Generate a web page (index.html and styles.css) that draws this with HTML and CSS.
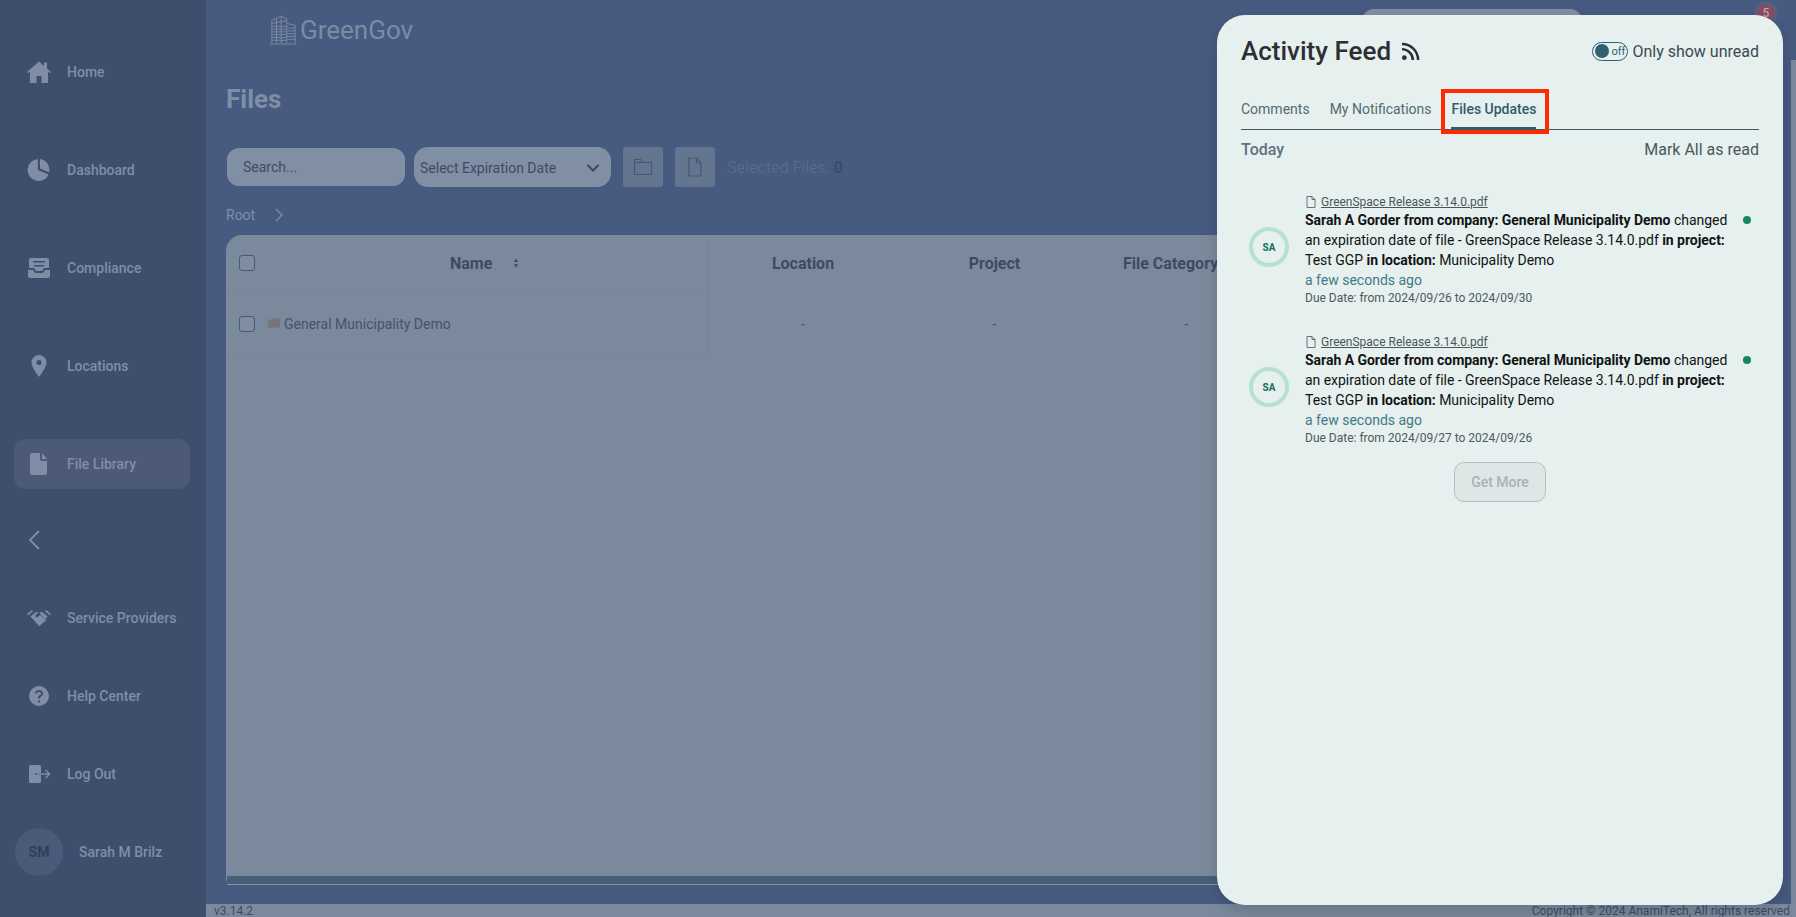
FILE: index.html
```html
<!DOCTYPE html>
<html>
	<head>
		<meta charset="utf-8">
		<title>Files - GreenGov</title>
		<link rel="stylesheet" href="styles.css">
	</head>
	<body>
		<!-- 左侧导航 -->
		<aside class="sidebar">
			<a class="nav-item">
				<svg class="nav-icon" viewBox="0 0 24 24"><path d="M12 1.500 0 12l1 1.200L3 11.600V23h6.500v-7h5v7H21V11.600l2 1.600 1-1.200-4-3.500V2.500h-3v3.400z"/></svg>
				<span>Home</span>
			</a>
			<a class="nav-item">
				<svg class="nav-icon" viewBox="0 0 24 24"><path d="M10.800 1A11 11 0 1 0 21.600 16.600L10.800 12zM13 1v9.600l9.200 3.600A11 11 0 0 0 13 1z"/></svg>
				<span>Dashboard</span>
			</a>
			<a class="nav-item">
				<svg class="nav-icon" viewBox="0 0 24 24"><path d="M4 2h16a2 2 0 0 1 2 2v8h-5l-2 3H9l-2-3H2V4a2 2 0 0 1 2-2zm2 3v1.500h12V5zm1 4v1.500h10V9zM1 14h5l2 3h8l2-3h5v6a2 2 0 0 1-2 2H3a2 2 0 0 1-2-2z" fill-rule="evenodd"/></svg>
				<span>Compliance</span>
			</a>
			<a class="nav-item">
				<svg class="nav-icon" viewBox="0 0 24 24"><path d="M12 1a7.500 7.500 0 0 0-7.500 7.500C4.500 13.500 12 23 12 23s7.500-9.500 7.500-14.500A7.500 7.500 0 0 0 12 1zm0 5a2.500 2.500 0 1 1 0 5 2.500 2.500 0 0 1 0-5z" fill-rule="evenodd"/></svg>
				<span>Locations</span>
			</a>
			<a class="nav-item active">
				<svg class="nav-icon" viewBox="0 0 24 24"><path d="M5 1h8v6a2 2 0 0 0 2 2h5v12a2 2 0 0 1-2 2H5a2 2 0 0 1-2-2V3a2 2 0 0 1 2-2zm10 0 5 6h-5z"/></svg>
				<span>File Library</span>
			</a>
			<div class="collapse">
				<svg viewBox="0 0 12 20"><path d="M11 1 2 10l9 9" fill="none" stroke="currentColor" stroke-width="1.800"/></svg>
			</div>
			<a class="nav-item low">
				<svg class="nav-icon" viewBox="0 0 24 24"><path d="M0 8 5 4l1 1.300-4.800 3.900zM24 8l-5-4-1 1.300 4.800 3.900zM3.500 10.500 9 6h2.500L8 10l2 1.500 3-2.500 6.500 5L13 19.500l-1 .5zM13.500 6H15l5.500 4.500-1.800 2.500-5.700-5z"/></svg>
				<span>Service Providers</span>
			</a>
			<a class="nav-item low">
				<svg class="nav-icon" viewBox="0 0 24 24"><path d="M12 2a10 10 0 1 0 0 20 10 10 0 0 0 0-20zm-1 14.500h2v2h-2zm1-10.500c2.300 0 4 1.400 4 3.400 0 1.500-.8 2.300-1.900 3-.9.600-1.100.9-1.100 2.100h-2c0-1.900.5-2.700 1.900-3.600.8-.5 1.100-.9 1.100-1.500 0-.8-.8-1.400-2-1.400-1.100 0-1.900.6-2.100 1.700l-2-.4C8.400 7.200 10 6 12 6z" fill-rule="evenodd"/></svg>
				<span>Help Center</span>
			</a>
			<a class="nav-item low">
				<svg class="nav-icon" viewBox="0 0 24 24"><path d="M3.500 3h9A1.500 1.500 0 0 1 14 4.500V11H8v2h6v6.500a1.500 1.500 0 0 1-1.500 1.500h-9A1.500 1.500 0 0 1 2 19.500v-15A1.500 1.500 0 0 1 3.500 3z"/><path class="out-arrow" d="M9 12h13.500M18.500 8l4 4-4 4"/></svg>
				<span>Log Out</span>
			</a>
			<div class="user">
				<div class="user-avatar">SM</div>
				<span>Sarah M Brilz</span>
			</div>
		</aside>

		<div class="main">
			<header class="topbar">
				<div class="logo">
					<svg class="logo-mark" viewBox="0 0 30 32" fill="none" stroke="currentColor" stroke-width="1">
						<path d="M3 30V6L13 1l6 3v26M19 9l9 2v19M1 31h28"/>
						<path d="M3 9l16-3M3 12h16M3 15h16M3 18h16M3 21h16M3 24h16M3 27h16M19 14h9M19 17h9M19 20h9M19 23h9M19 26h9M8 3v27M13 1v29"/>
					</svg>
					<span>GreenGov</span>
				</div>
				<div class="top-search"></div>
				<div class="top-badge"><span>5</span></div>
			</header>

			<section class="content">
				<h1>Files</h1>
				<div class="toolbar">
					<div class="search">Search...</div>
					<div class="select">
						<span>Select Expiration Date</span>
						<svg viewBox="0 0 14 10"><path d="M1.500 2 7 7.500 12.500 2" fill="none" stroke="currentColor" stroke-width="2.200"/></svg>
					</div>
					<div class="tool-btn">
						<svg viewBox="0 0 20 18" fill="none" stroke="currentColor" stroke-width="1.200"><path d="M1.500 16.500V1.500h6l2 3h9v12zM1.500 4.500h8"/></svg>
					</div>
					<div class="tool-btn">
						<svg viewBox="0 0 14 20" fill="none" stroke="currentColor" stroke-width="1.200"><path d="M1 1h7.500L13 6v13H1zM8.500 1v5H13"/></svg>
					</div>
					<div class="selected">Selected Files: <b>0</b></div>
				</div>
				<div class="crumbs">
					<span>Root</span>
					<svg viewBox="0 0 8 14"><path d="M1 1l6 6-6 6" fill="none" stroke="currentColor" stroke-width="1.200"/></svg>
				</div>

				<div class="table">
					<div class="t-row t-head">
						<div class="t-name">
							<i class="check"></i>
							<span class="t-title">Name</span>
							<svg class="sort" viewBox="0 0 8 12"><path d="M4 0l3 4.500H1zM4 12 1 7.500h6z"/></svg>
						</div>
						<div class="t-cell">Location</div>
						<div class="t-cell">Project</div>
						<div class="t-cell shifted">File Category</div>
					</div>
					<div class="t-row t-body">
						<div class="t-name">
							<i class="check"></i>
							<svg class="folder" viewBox="0 0 12 10"><path d="M0 1.500h5V.500h7V9.500H0z"/></svg>
							<span>General Municipality Demo</span>
						</div>
						<div class="t-cell">-</div>
						<div class="t-cell">-</div>
						<div class="t-cell">-</div>
					</div>
					<div class="t-scroll"></div>
				</div>
			</section>

			<footer class="footer">
				<span>v3.14.2</span>
				<span>Copyright © 2024 AnamiTech, All rights reserved</span>
			</footer>
		</div>

		<!-- 右侧活动面板 盖在页面上面 -->
		<aside class="feed">
			<div class="feed-top">
				<h2>Activity Feed</h2>
				<svg class="rss" viewBox="0 0 20 20"><circle cx="3.500" cy="16.500" r="2.500"/><path d="M1 7.500a11.500 11.500 0 0 1 11.500 11.500M1 2a17 17 0 0 1 17 17" fill="none" stroke="currentColor" stroke-width="2.600"/></svg>
				<div class="toggle"><i></i><span>off</span></div>
				<span class="toggle-label">Only show unread</span>
			</div>

			<nav class="tabs">
				<a>Comments</a>
				<a>My Notifications</a>
				<a class="current">Files Updates</a>
				<div class="tab-mark"></div>
			</nav>

			<div class="day">
				<b>Today</b>
				<span>Mark All as read</span>
			</div>

			<article class="note">
				<div class="note-avatar">SA</div>
				<div class="note-text">
					<a class="note-file">
						<svg viewBox="0 0 10 12" fill="none" stroke="currentColor" stroke-width=".8"><path d="M1 .5h5L9 3.500V11.500H1zM6 .5v3h3"/></svg>
						<u>GreenSpace Release 3.14.0.pdf</u>
					</a>
					<p><b>Sarah A Gorder from company: General Municipality Demo</b> changed an expiration date of file - GreenSpace Release 3.14.0.pdf <b>in project:</b> Test GGP <b>in location:</b> Municipality Demo</p>
					<div class="note-time">a few seconds ago</div>
					<div class="note-due">Due Date: from 2024/09/26 to 2024/09/30</div>
				</div>
				<i class="dot"></i>
			</article>

			<article class="note">
				<div class="note-avatar">SA</div>
				<div class="note-text">
					<a class="note-file">
						<svg viewBox="0 0 10 12" fill="none" stroke="currentColor" stroke-width=".8"><path d="M1 .5h5L9 3.500V11.500H1zM6 .5v3h3"/></svg>
						<u>GreenSpace Release 3.14.0.pdf</u>
					</a>
					<p><b>Sarah A Gorder from company: General Municipality Demo</b> changed an expiration date of file - GreenSpace Release 3.14.0.pdf <b>in project:</b> Test GGP <b>in location:</b> Municipality Demo</p>
					<div class="note-time">a few seconds ago</div>
					<div class="note-due">Due Date: from 2024/09/27 to 2024/09/26</div>
				</div>
				<i class="dot"></i>
			</article>

			<div class="more-wrap"><button class="more">Get More</button></div>

			<!-- 红框 标出当前tab -->
			<div class="marker"></div>
		</aside>
	</body>
</html>
```

FILE: styles.css
```css
*{
	box-sizing: border-box;
}
html,body{
	height: 100%;
}
body{
	display: flex;
	height: 917px;
	margin: 0;
	overflow: hidden;
	background-color: #475a80;
	font-family: Roboto, "Liberation Sans", sans-serif;
}

/* 左侧导航 */
.sidebar{
	display: flex;
	flex-direction: column;
	flex: none;
	width: 206px;
	padding: 47px 16px 0 14px;
	background-color: #3e4e6d;
	color: #7f8ea6;
}
.nav-item{
	display: flex;
	align-items: center;
	height: 50px;
	margin-bottom: 48px;
	padding-left: 13px;
	border-radius: 12px;
	font-size: 14px;
	font-weight: 500;
}
.nav-item.low{
	margin-bottom: 28px;
}
.nav-item.active{
	margin-bottom: 41px;
	background-color: #4c5a78;
}
.nav-icon{
	flex: none;
	width: 24px;
	height: 24px;
	margin-right: 16px;
	fill: currentColor;
}
.out-arrow{
	fill: none;
	stroke: currentColor;
	stroke-width: 1.400;
}
.collapse{
	height: 24px;
	margin-bottom: 39px;
	padding-left: 14px;
}
.collapse svg{
	display: block;
	width: 12px;
	height: 20px;
}
.user{
	display: flex;
	align-items: center;
	margin-top: 1px;
	margin-left: 1px;
	font-size: 14px;
	font-weight: 500;
}
.user-avatar{
	display: flex;
	align-items: center;
	justify-content: center;
	width: 48px;
	height: 48px;
	margin-right: 16px;
	border-radius: 50%;
	background-color: #4a5a79;
	color: #323e58;
	font-weight: 700;
}

/* 主体 */
.main{
	display: flex;
	flex-direction: column;
	flex: 1;
	min-width: 0;
}
.topbar{
	position: relative;
	display: flex;
	align-items: center;
	flex: none;
	height: 60px;
	padding-left: 63px;
	border-bottom: 1px solid #445576;
}
.logo{
	display: flex;
	align-items: center;
	margin-top: 1px;
	color: #7c8ba4;
	font-size: 26px;
}
.logo-mark{
	width: 28px;
	height: 30px;
	margin-right: 3px;
}
.top-search{
	position: absolute;
	top: 9px;
	left: 1156px;
	width: 220px;
	height: 40px;
	border-radius: 12px;
	background-color: #818fa5;
}
.top-badge{
	position: absolute;
	top: 1px;
	right: 18px;
	width: 24px;
	height: 24px;
	padding: 3px;
	border-radius: 50%;
	background-color: #4c6582;
}
.top-badge span{
	display: block;
	width: 18px;
	height: 18px;
	border-radius: 50%;
	background-color: #8a4a62;
	color: #b9a5ae;
	font-size: 12px;
	font-weight: 500;
	line-height: 18px;
	text-align: center;
}

.content{
	display: flex;
	flex-direction: column;
	flex: 1;
	min-height: 0;
	padding: 0 40px 19px 20px;
	border-right: 5px solid #7a8a9c;
}
h1{
	height: 34px;
	margin: 23px 0 0;
	color: #7f8ea6;
	font-size: 26px;
	font-weight: 700;
	line-height: 32px;
}
.toolbar{
	display: flex;
	align-items: center;
	gap: 9px;
	height: 40px;
	margin-top: 30px;
	margin-left: 1px;
}
.search{
	width: 178px;
	height: 38px;
	padding-left: 16px;
	border-radius: 12px;
	background-color: #818fa5;
	color: #3e4a63;
	font-size: 14px;
	line-height: 38px;
}
.select{
	display: flex;
	align-items: center;
	justify-content: space-between;
	width: 197px;
	height: 40px;
	padding: 2px 11px 0 6px;
	border-radius: 14px;
	background-color: #818fa5;
	color: #3e4a63;
	font-size: 14px;
}
.select svg{
	width: 14px;
	height: 10px;
}
.tool-btn{
	display: flex;
	align-items: center;
	justify-content: center;
	width: 40px;
	height: 40px;
	margin-left: 3px;
	border-radius: 3px;
	background-color: #64758f;
	color: #47577a;
}
.tool-btn svg{
	width: 20px;
	height: 20px;
}
.selected{
	margin-left: 3px;
	color: #5a6985;
	font-size: 16px;
}
.selected b{
	color: #3e4a63;
}
.crumbs{
	display: flex;
	align-items: center;
	height: 20px;
	margin-top: 18px;
	color: #7f8ea6;
	font-size: 14px;
}
.crumbs svg{
	width: 8px;
	height: 14px;
	margin-left: 20px;
}

/* 表格 */
.table{
	position: relative;
	flex: 1;
	margin-top: 10px;
	padding-bottom: 8px;
	border-radius: 16px 16px 0 6px;
	background-color: #7a8a9c;
	color: #46526b;
	font-size: 14px;
}
.t-row{
	display: grid;
	grid-template-columns: 483px 191px 192px 192px;
	align-items: stretch;
}
.t-head{
	height: 57px;
	color: #3e4a63;
	font-size: 16px;
	font-weight: 700;
}
.t-body{
	height: 64px;
}
.t-name{
	position: relative;
	display: flex;
	align-items: center;
	padding-left: 13px;
	border-right: 1px solid #76869a;
	border-bottom: 1px solid #76869a;
}
.t-cell{
	display: flex;
	align-items: center;
	justify-content: center;
	padding-right: 3px;
}
.t-cell.shifted{
	justify-content: flex-start;
	padding-right: 0;
	padding-left: 31px;
	white-space: nowrap;
}
.check{
	flex: none;
	width: 16px;
	height: 16px;
	border: 1px solid #485a7c;
	border-radius: 3px;
	background-color: #7f8da3;
}
.t-body .check{
	margin-right: 13px;
}
.t-title{
	margin-left: 195px;
}
.sort{
	width: 6px;
	height: 10px;
	margin-left: 21px;
	fill: currentColor;
}
.folder{
	width: 12px;
	height: 10px;
	margin: -2px 4px 0 0;
	fill: #75757a;
}
.t-scroll{
	position: absolute;
	right: 0;
	bottom: 0;
	left: 1px;
	height: 9px;
	border-bottom: 1px solid #7f95a8;
	background-color: #466177;
}

.footer{
	display: flex;
	justify-content: space-between;
	flex: none;
	height: 13px;
	padding: 0 6px 0 8px;
	background-color: #7a8a9c;
	color: #3e4a63;
	font-size: 12px;
	line-height: 15px;
}

/* 活动面板 */
.feed{
	position: absolute;
	top: 15px;
	left: 1217px;
	width: 566px;
	height: 890px;
	padding: 18px 24px 0;
	border-radius: 28px;
	background-color: #e6f0ee;
	box-shadow: 0 6px 16px rgba(0,0,0,0.15);
}
.feed-top{
	display: flex;
	align-items: center;
	height: 36px;
}
h2{
	margin: 0;
	color: #2b2f33;
	font-size: 26px;
	font-weight: 500;
}
.rss{
	width: 19px;
	height: 19px;
	margin-top: 1px;
	margin-left: 10px;
	fill: #2b2f33;
	color: #2b2f33;
}
.toggle{
	display: flex;
	align-items: center;
	justify-content: space-between;
	width: 36px;
	height: 19px;
	margin-left: auto;
	padding: 0 2px;
	border: 1px solid #2f6170;
	border-radius: 10px;
	color: #2f6170;
	font-size: 11px;
}
.toggle i{
	width: 14px;
	height: 14px;
	border-radius: 50%;
	background-color: #2f6170;
}
.toggle-label{
	margin-left: 4px;
	color: #3b4a4e;
	font-size: 16px;
}
.tabs{
	position: relative;
	display: flex;
	height: 31px;
	margin-top: 30px;
	border-bottom: 1px solid #3c5a68;
	font-size: 14px;
	line-height: 20px;
}
.tabs a{
	margin-right: 20px;
	color: #526a70;
}
.tabs a.current{
	color: #2f5d6b;
	font-weight: 500;
}
.tab-mark{
	position: absolute;
	bottom: -1px;
	left: 210px;
	width: 85px;
	height: 3px;
	background-color: #2f5d6b;
}
.day{
	display: flex;
	align-items: center;
	justify-content: space-between;
	height: 22px;
	margin-top: 8px;
	font-size: 16px;
	color: #48585c;
}
.day b{
	color: #5f7184;
	font-weight: 500;
}

.note{
	display: flex;
	padding-left: 8px;
}
.day + .note{
	margin-top: 33px;
}
.note + .note{
	margin-top: 27px;
}
.note-avatar{
	display: flex;
	align-items: center;
	justify-content: center;
	flex: none;
	width: 40px;
	height: 40px;
	margin: 34px 16px 0 0;
	border: 4px solid #b5e0d2;
	border-radius: 50%;
	color: #14704f;
	font-size: 10px;
	font-weight: 700;
}
.note-text{
	width: 425px;
}
.note-file{
	display: flex;
	align-items: center;
	height: 17px;
	color: #49575b;
	font-size: 12px;
}
.note-file svg{
	width: 10px;
	height: 12px;
	margin: 0 5px 0 1px;
}
.note-text p{
	margin: 0;
	color: #101414;
	font-size: 14px;
	letter-spacing: -0.03px;
	line-height: 20px;
}
.note-text p b{
	font-weight: 700;
}
.note-time{
	color: #3f7a88;
	font-size: 14px;
	line-height: 20px;
}
.note-due{
	color: #4c5a5e;
	font-size: 12px;
	line-height: 16px;
}
.dot{
	flex: none;
	width: 8px;
	height: 8px;
	margin: 23px 0 0 13px;
	border-radius: 50%;
	background-color: #16875f;
}
.more-wrap{
	display: flex;
	justify-content: center;
	margin-top: 16px;
}
.more{
	width: 92px;
	height: 40px;
	padding: 0;
	border: 1px solid #b5bfbf;
	border-radius: 10px;
	background-color: #dfe6e6;
	color: #a9b3b5;
	font-family: inherit;
	font-size: 14px;
	font-weight: 500;
}
.marker{
	position: absolute;
	top: 74px;
	left: 224px;
	width: 108px;
	height: 45px;
	border: 4px solid #ff2a00;
}
```
